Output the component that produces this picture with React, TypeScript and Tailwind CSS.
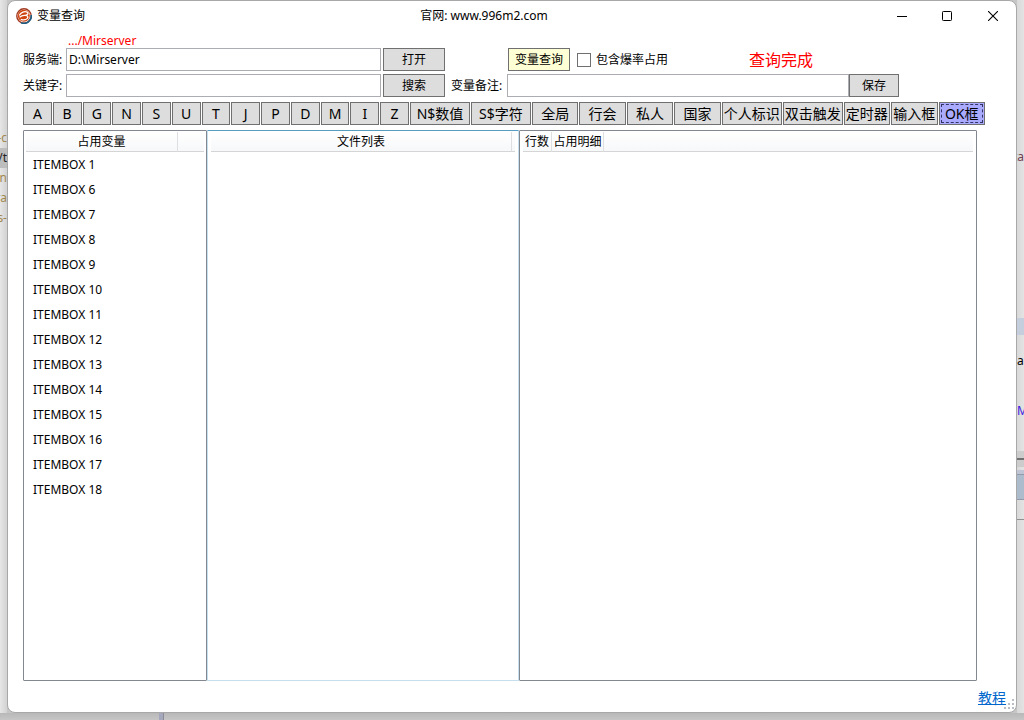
import React, { useState } from 'react'
import clsx from 'clsx'

const LETTERS = ['A', 'B', 'G', 'N', 'S', 'U', 'T', 'J', 'P', 'D', 'M', 'I', 'Z']

const KINDS = [
  { name: 'N$数值', wide: true },
  { name: 'S$字符', wide: true },
  { name: '全局', wide: false },
  { name: '行会', wide: false },
  { name: '私人', wide: false },
  { name: '国家', wide: false },
  { name: '个人标识', wide: true },
  { name: '双击触发', wide: true },
  { name: '定时器', wide: false },
  { name: '输入框', wide: false },
  { name: 'OK框', wide: false },
]

const USED = [1, 6, 7, 8, 9, 10, 11, 12, 13, 14, 15, 16, 17, 18]

const BUTTON = 'h-[23px] border border-[#707070] bg-[#dddddd] whitespace-nowrap leading-none'
const FIELD = 'h-[23px] w-full min-w-0 border border-[#abadb3] bg-white px-0.5 outline-none'
const HEAD = 'h-5 border-b border-[#d5d5d5] bg-linear-to-b from-white to-[#f7f8fa] p-0 font-normal whitespace-nowrap'

const Logo = () => (
  <svg viewBox="0 0 16 16" className="h-4 w-4 shrink-0" fill="none" aria-hidden="true">
    <circle cx="8" cy="8" r="7.2" stroke="#a33a20" strokeWidth="1.4" />
    <path d="M15.200 7A7.200 7.200 0 0 1 5 14.600" stroke="#1c5f86" strokeWidth="1.600" />
    <circle cx="7.800" cy="7.800" r="6" fill="#d0440f" />
    <path d="M3.200 7.600C4.600 4.200 8.800 2.600 11.600 4.400C12.600 5.600 11.600 6.800 9.600 7.400" stroke="#fff" strokeWidth="1.300" />
    <path d="M3.600 9.200C5.400 7.600 7.400 7 9.600 7.400C11.800 7.800 12.400 9 11.400 10.400C9.800 12 7 12.200 4.800 11.400" stroke="#fff" strokeWidth="1.300" />
  </svg>
)

const TitleBar = () => (
  <header className="flex h-[30px] items-center pl-2">
    <Logo />
    <h1 className="ml-[5px]">变量查询</h1>
    <div className="flex-1 pl-1 text-center">官网: www.996m2.com</div>
    <button aria-label="最小化" className="flex h-full w-[45px] items-center justify-center">
      <svg width="10" height="10" aria-hidden="true">
        <path d="M0 5.500H10" stroke="#000" />
      </svg>
    </button>
    <button aria-label="最大化" className="flex h-full w-[46px] items-center justify-center">
      <svg width="10" height="10" aria-hidden="true">
        <rect x="0.500" y="0.500" width="9" height="9" rx="0.800" fill="none" stroke="#000" />
      </svg>
    </button>
    <button aria-label="关闭" className="flex h-full w-[46px] items-center justify-center">
      <svg width="10" height="10" aria-hidden="true">
        <path d="M0 0L10 10M10 0L0 10" stroke="#000" strokeWidth="1.100" />
      </svg>
    </button>
  </header>
)

const SearchForm = () => {
  const [server, setServer] = useState('D:\\Mirserver')
  const [keyword, setKeyword] = useState('')
  const [note, setNote] = useState('')

  return (
    <div className="grid grid-cols-[43px_minmax(0,315fr)_64px_62px_minmax(0,342fr)_50px] items-center gap-y-[3px] pr-[117px] pl-[15px]">
      <div className="col-start-2 -mb-[3px] h-[17px] pl-0.5 leading-5 text-[#ff0000]">.../Mirserver</div>

      <label htmlFor="server" className="col-start-1">服务端:</label>
      <input id="server" className={FIELD} value={server} onChange={(e) => setServer(e.target.value)} />
      <div className="flex pl-0.5">
        <button className={clsx(BUTTON, 'flex-1')}>打开</button>
      </div>
      <div className="col-span-2 col-start-5 flex items-center pl-px">
        <button className="h-[23px] w-[62px] border border-[#707070] bg-[#ffffd5] leading-none whitespace-nowrap">
          变量查询
        </button>
        <label className="ml-[7px] flex items-center gap-[5px] whitespace-nowrap">
          <input type="checkbox" className="h-[14px] w-[14px] appearance-none border border-[#707070] bg-white" />
          包含爆率占用
        </label>
        <output className="ml-auto pr-[86px] text-base leading-5 whitespace-nowrap text-[#ff0000]">查询完成</output>
      </div>

      <label htmlFor="keyword" className="col-start-1">关键字:</label>
      <input id="keyword" className={FIELD} value={keyword} onChange={(e) => setKeyword(e.target.value)} />
      <div className="flex pl-0.5">
        <button className={clsx(BUTTON, 'flex-1')}>搜索</button>
      </div>
      <label htmlFor="note" className="pl-1.5 whitespace-nowrap">变量备注:</label>
      <input id="note" className={FIELD} value={note} onChange={(e) => setNote(e.target.value)} />
      <button className={BUTTON}>保存</button>
    </div>
  )
}

const KindBar = () => {
  const [active, setActive] = useState('OK框')

  return (
    <nav className="mt-[5px] grid grid-cols-[minmax(0,386fr)_minmax(0,575fr)] gap-px pr-[31px] pl-[15px] text-sm">
      <div className="flex gap-px">
        {LETTERS.map((letter) => (
          <button key={letter} onClick={() => setActive(letter)} className={clsx(BUTTON, 'min-w-0 flex-1')}>
            {letter}
          </button>
        ))}
      </div>
      <div className="flex gap-px">
        {KINDS.map((kind) => (
          <button
            key={kind.name}
            onClick={() => setActive(kind.name)}
            className={clsx(
              'flex h-[23px] min-w-0 items-center justify-center border border-[#707070] leading-none whitespace-nowrap',
              kind.wide ? 'flex-[60]' : 'flex-[46]',
              active === kind.name
                ? 'bg-[#aaaaff] outline-1 -outline-offset-3 outline-dashed outline-[#333366]'
                : 'bg-[#dddddd]'
            )}
          >
            {kind.name}
          </button>
        ))}
      </div>
    </nav>
  )
}

const Panels = () => (
  <main className="mt-[5px] flex min-h-0 flex-1 pr-[39px] pl-[15px]">
    <section className="w-[184px] shrink-0 overflow-hidden rounded-[1px] border border-[#828790] px-0.5 pt-px">
      <table className="w-full table-fixed border-separate border-spacing-0">
        <thead>
          <tr>
            <th className={clsx(HEAD, 'w-[152px] border-r border-r-[#dedfe1]')}>占用变量</th>
            <td className={HEAD} />
          </tr>
        </thead>
        <tbody>
          {USED.map((id) => (
            <tr key={id}>
              <td colSpan={2} className="h-[25px] p-0 pl-[7px]">ITEMBOX {id}</td>
            </tr>
          ))}
        </tbody>
      </table>
    </section>

    <section className="w-[312px] shrink-0 overflow-hidden rounded-[1px] border border-[#c5dfee] border-t-[#569dc0] px-[3px] pt-px">
      <table className="w-full table-fixed border-separate border-spacing-0">
        <thead>
          <tr>
            <th className={clsx(HEAD, 'border-r border-r-[#dedfe1]')}>文件列表</th>
            <td className={clsx(HEAD, 'w-[3px]')} />
          </tr>
        </thead>
      </table>
    </section>

    <section className="min-w-0 flex-1 overflow-hidden rounded-[1px] border border-[#828790] px-[3px] pt-px">
      <table className="w-full table-fixed border-separate border-spacing-0">
        <thead>
          <tr>
            <th className={clsx(HEAD, 'w-[29px] border-r border-r-[#dedfe1]')}>行数</th>
            <th className={clsx(HEAD, 'w-[52px] border-r border-r-[#dedfe1]')}>占用明细</th>
            <td className={HEAD} />
          </tr>
        </thead>
      </table>
    </section>
  </main>
)

// Slivers of the editor window that lies behind this one
const LeftEdge = () => (
  <div className="w-[7px] shrink-0 overflow-hidden bg-linear-to-r from-[#e6e6e6] to-[#d2d2d2] pt-32 leading-5 whitespace-nowrap text-[#a08850]" aria-hidden="true">
    <div className="flex justify-end">-c</div>
    <div className="flex justify-end bg-[#bdbdbd] text-[#222222]">/t</div>
    <div className="flex justify-end">an</div>
    <div className="flex justify-end">ra</div>
    <div className="flex justify-end">s-</div>
  </div>
)

const RightEdge = () => (
  <div className="w-[7px] shrink-0 overflow-hidden bg-linear-to-r from-[#d9d9d9] to-[#e3e3e3] pt-[147px] leading-5 whitespace-nowrap" aria-hidden="true">
    <div className="flex justify-end text-[#704050]">ta</div>
    <div className="mt-[151px] h-[17px] bg-[#c5cedd]" />
    <div className="mt-4 text-black">ab</div>
    <div className="mt-[30px] text-[#4020e0]">M</div>
    <div className="mt-[30px] h-[7px] bg-[#cccccc]" />
    <div className="h-0.5 bg-[#707070]" />
    <div className="h-[7px] bg-[#cccccc]" />
    <div className="mt-[3px] h-1 bg-[#bfc5d5]" />
    <div className="h-[26px] border-y border-[#9299a8] bg-[#adbccc]" />
    <div className="h-5 border-b border-[#909090]" />
  </div>
)

export default function App() {
  return (
    <div className="flex h-screen flex-col bg-[#c6c6c6] font-['Noto_Sans','Noto_Sans_CJK_SC',sans-serif] text-xs text-black">
      <div className="flex min-h-0 flex-1">
        <LeftEdge />
        <div className="relative flex min-w-0 flex-1 flex-col rounded-lg border border-[#a8a8a8] bg-white">
          <TitleBar />
          <SearchForm />
          <KindBar />
          <Panels />
          <footer className="flex h-[31px] items-center justify-end pt-0.5 pr-[10px] text-sm">
            <a href="#help" className="text-[#0066cc] underline">教程</a>
          </footer>
          <svg className="absolute right-px bottom-0.5" width="11" height="11" fill="#b9bdc4" aria-hidden="true">
            <path d="M8 0h2v2h-2zM4 4h2v2h-2zM8 4h2v2h-2zM0 8h2v2h-2zM4 8h2v2h-2zM8 8h2v2h-2z" />
          </svg>
        </div>
        <RightEdge />
      </div>
      <div className="h-[7px] shrink-0 bg-linear-to-b from-[#b8b8b8] to-[#c6c6c6] pl-[159px]" aria-hidden="true">
        <div className="h-full w-[5px] border-r border-[#8c8c98] bg-[#a5a7bd]" />
      </div>
    </div>
  )
}
